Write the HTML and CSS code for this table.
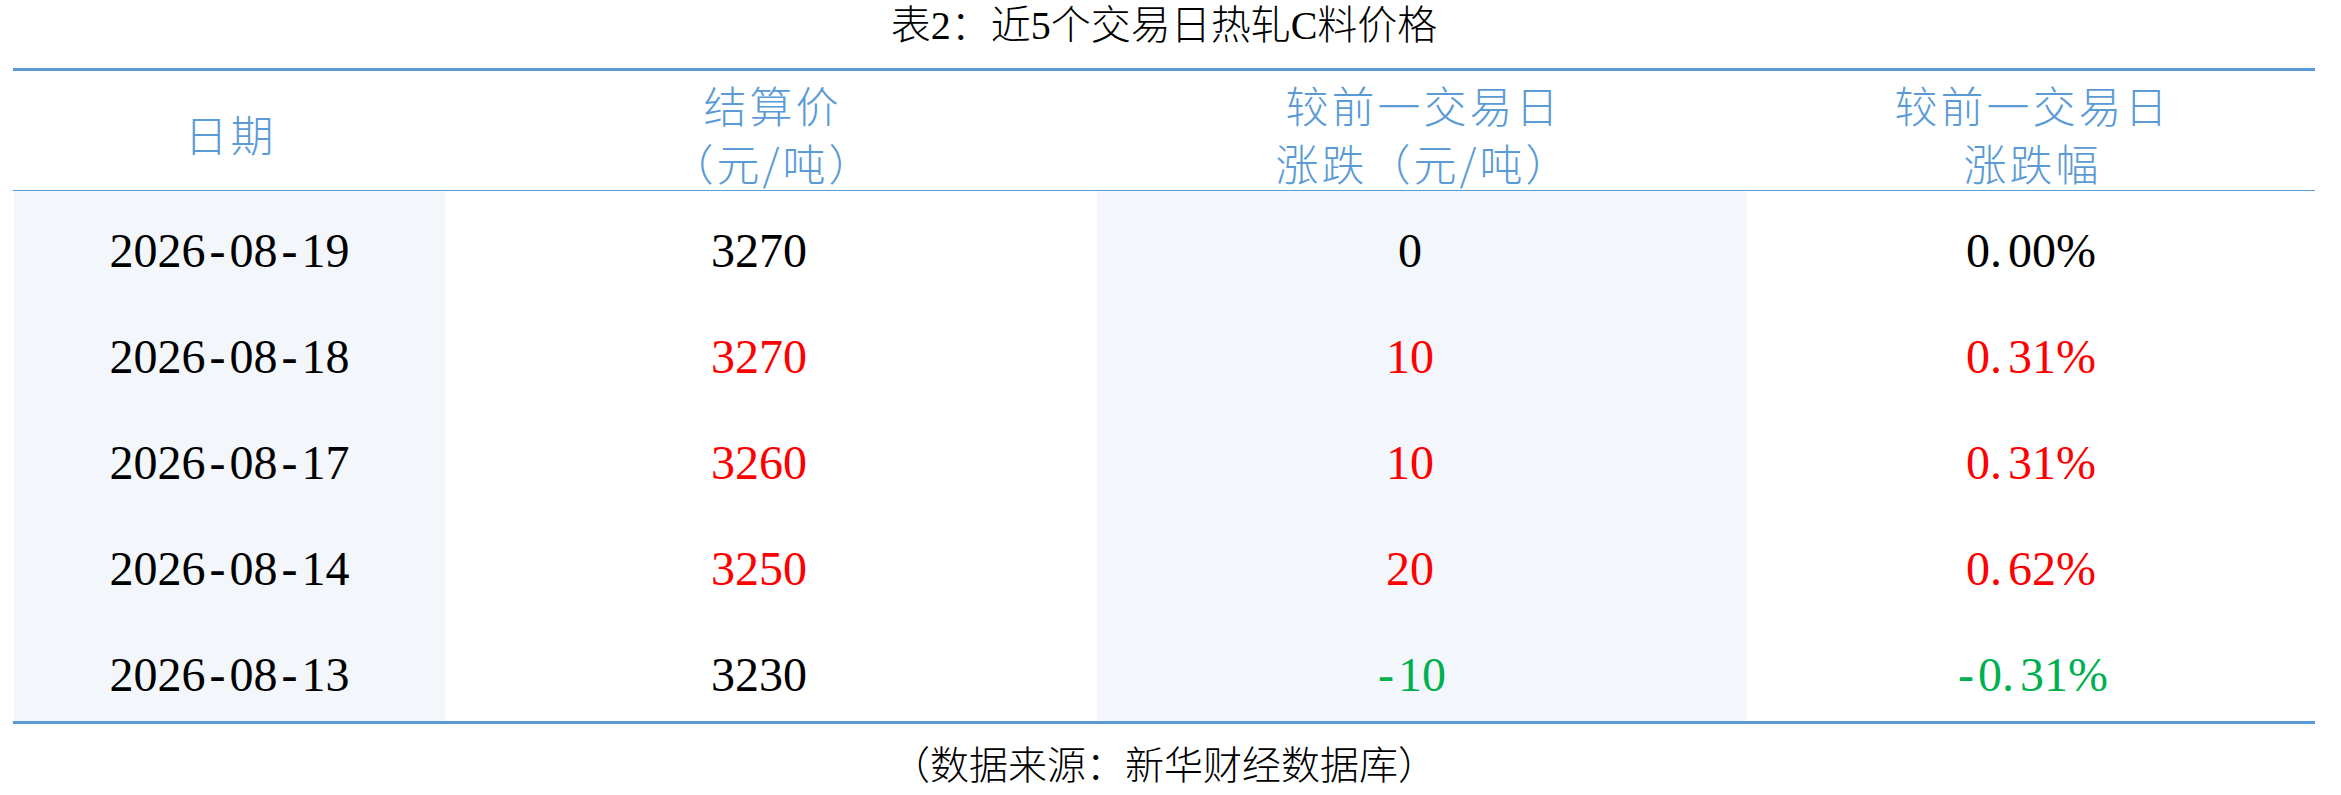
FILE: index.html
```html
<!DOCTYPE html>
<html lang="zh-CN">
<head>
<meta charset="utf-8">
<title>表2：近5个交易日热轧C料价格</title>
<link rel="stylesheet" href="styles.css">
</head>
<body>
<div class="page">
  <div class="title">表2：近5个交易日热轧C料价格</div>
  <div class="table">
    <div class="th"><span class="ln">日期</span></div>
    <div class="th"><span class="ln">结算价</span><span class="ln">（元/吨）</span></div>
    <div class="th"><span class="ln">较前一交易日</span><span class="ln">涨跌（元/吨）</span></div>
    <div class="th"><span class="ln">较前一交易日</span><span class="ln">涨跌幅</span></div>

    <div class="td shade first">2026<span class="hy">-</span>08<span class="hy">-</span>19</div>
    <div class="td off">3270</div>
    <div class="td shade off">0</div>
    <div class="td">0<span class="dot">.</span>00%</div>

    <div class="td shade first">2026<span class="hy">-</span>08<span class="hy">-</span>18</div>
    <div class="td off up">3270</div>
    <div class="td shade off up">10</div>
    <div class="td up">0<span class="dot">.</span>31%</div>

    <div class="td shade first">2026<span class="hy">-</span>08<span class="hy">-</span>17</div>
    <div class="td off up">3260</div>
    <div class="td shade off up">10</div>
    <div class="td up">0<span class="dot">.</span>31%</div>

    <div class="td shade first">2026<span class="hy">-</span>08<span class="hy">-</span>14</div>
    <div class="td off up">3250</div>
    <div class="td shade off up">20</div>
    <div class="td up">0<span class="dot">.</span>62%</div>

    <div class="td shade first">2026<span class="hy">-</span>08<span class="hy">-</span>13</div>
    <div class="td off">3230</div>
    <div class="td shade off down"><span class="hy">-</span>10</div>
    <div class="td down"><span class="hy">-</span>0<span class="dot">.</span>31%</div>
  </div>
  <div class="source">（数据来源：新华财经数据库）</div>
</div>
</body>
</html>
```

FILE: styles.css
```css
html, body {
  margin: 0;
  padding: 0;
  background: #ffffff;
}

.page {
  width: 2302px;
  margin-left: 13px;
  font-family: "Liberation Serif", "Noto Sans CJK SC", serif;
  color: #000000;
}

.title {
  height: 52px;
  line-height: 52px;
  margin-bottom: 16px;
  text-align: center;
  font-size: 40px;
  font-weight: 300;
}

.table {
  display: grid;
  grid-template-columns: 432px 652px 650px 568px;
  grid-template-rows: 120px repeat(5, 106px);
  border-top: 3px solid #5b9bd5;
  border-bottom: 3px solid #5b9bd5;
}

.th {
  border-bottom: 1px solid #5b9bd5;
  display: flex;
  flex-direction: column;
  align-items: center;
  justify-content: center;
  text-align: center;
  font-family: "Noto Sans CJK SC", sans-serif;
  font-weight: 300;
  font-size: 43px;
  color: #5b9bd5;
  padding-top: 4px;
  box-sizing: border-box;
}

.ln {
  display: block;
  height: 58px;
  line-height: 58px;
  letter-spacing: 3px;
  margin-right: -3px;
}

.td {
  display: flex;
  align-items: center;
  justify-content: center;
  font-size: 48px;
  padding-top: 12px;
  box-sizing: border-box;
}

.shade {
  background: #f3f6fb;
}

.first {
  margin-left: 1px;
}

.off {
  padding-right: 24px;
}

.up {
  color: #ff0000;
}

.down {
  color: #00b050;
}

.hy {
  display: inline-block;
  margin: 0 4px;
}

.dot {
  display: inline-block;
  margin-right: 6px;
}

.source {
  margin-top: 17px;
  height: 50px;
  line-height: 50px;
  text-align: center;
  font-size: 39px;
  font-weight: 300;
}
```
